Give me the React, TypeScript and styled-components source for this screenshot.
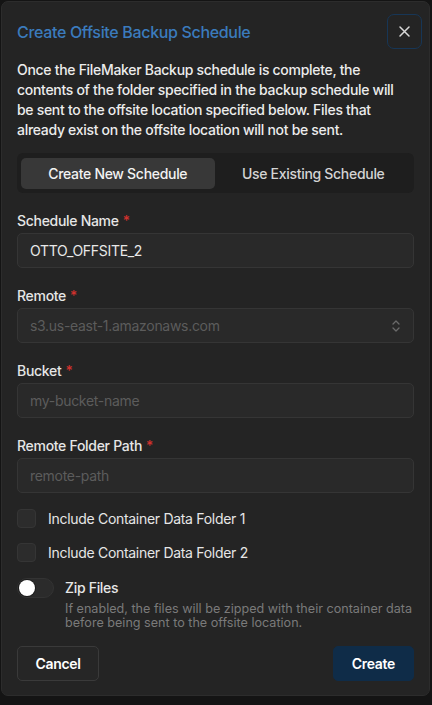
import React from "react";
import styled, { createGlobalStyle } from "styled-components";

const Global = createGlobalStyle`
  html, body { margin: 0; padding: 0; background: #141414; }
  body { font-family: Inter, "Noto Sans", "Liberation Sans", sans-serif; -webkit-font-smoothing: antialiased; letter-spacing: -0.3px; }
  * { box-sizing: border-box; }
`;

const Modal = styled.div`
  margin: 1px;
  width: 429px;
  height: 695px;
  background: #242424;
  border: 1px solid #2c2c2c;
  border-radius: 7px;
  padding: 12px 15px 0 15px;
  display: flex;
  flex-direction: column;
  color: #ececec;
`;

const Header = styled.div`
  display: flex;
  align-items: center;
  justify-content: space-between;
  height: 35px;
`;

const Title = styled.h2`
  margin: 0;
  font-size: 16px;
  font-weight: 500;
  color: #3b7bbd;
  letter-spacing: -0.33px;
`;

const CloseButton = styled.button`
  width: 35px;
  height: 35px;
  margin-right: -8px;
  border: 1.5px solid #173656;
  border-radius: 7px;
  background: transparent;
  display: flex;
  align-items: center;
  justify-content: center;
  padding: 0;
  color: #d8d8d8;
`;

const Description = styled.p`
  margin: 11px 0 0 0;
  font-size: 14px;
  line-height: 20px;
  font-weight: 500;
  color: #ececec;
  white-space: nowrap;
`;

const Tabs = styled.div`
  margin-top: 13px;
  height: 40px;
  background: #1e1e1e;
  border-radius: 6px;
  padding: 5px 4px 4px 4px;
  display: grid;
  grid-template-columns: 1fr 1fr;
  gap: 2px;
`;

const Tab = styled.div<{ $active?: boolean }>`
  display: flex;
  align-items: center;
  justify-content: center;
  border-radius: 5px;
  background: ${(p) => (p.$active ? "#383838" : "transparent")};
  color: ${(p) => (p.$active ? "#f2f2f2" : "#d4d4d4")};
  font-size: 14px;
  font-weight: 500;
`;

const Form = styled.div`
  margin-top: 18px;
  display: flex;
  flex-direction: column;
  gap: 18px;
`;

const Field = styled.div`
  display: flex;
  flex-direction: column;
  gap: 2px;
`;

const Label = styled.label`
  font-size: 14px;
  line-height: 20px;
  font-weight: 500;
  color: #e6e6e6;
`;

const Star = styled.span`
  color: #d0312d;
  margin-left: 4px;
`;

const InputBox = styled.div<{ $placeholder?: boolean }>`
  height: 35px;
  border: 1px solid #353535;
  background: #292929;
  border-radius: 5px;
  padding: 0 12px;
  display: flex;
  align-items: center;
  justify-content: space-between;
  font-size: 14px;
  color: ${(p) => (p.$placeholder ? "#5c5c5c" : "#e8e8e8")};
`;

const Checks = styled.div`
  margin-top: 16px;
  display: flex;
  flex-direction: column;
  gap: 15px;
`;

const CheckRow = styled.div`
  display: flex;
  align-items: center;
  gap: 12px;
  font-size: 14px;
  color: #e6e6e6;
`;

const CheckBox = styled.span`
  width: 19px;
  height: 19px;
  border-radius: 4px;
  background: #2c2c2c;
  border: 1px solid #353535;
`;

const ToggleRow = styled.div`
  margin-top: 16px;
  display: flex;
  gap: 11px;
`;

const Toggle = styled.span`
  width: 37px;
  height: 20px;
  border-radius: 10px;
  background: #2b2b2b;
  border: 1px solid #333;
  padding: 1px;
  display: flex;
  align-items: center;
  flex-shrink: 0;
`;

const Knob = styled.span`
  width: 16px;
  height: 16px;
  border-radius: 50%;
  background: #ffffff;
  box-shadow: 0 0 0 1px #1a1a1a;
`;

const ToggleText = styled.div`
  display: flex;
  flex-direction: column;
`;

const ToggleLabel = styled.div`
  font-size: 14px;
  line-height: 20px;
  font-weight: 500;
  color: #e6e6e6;
`;

const Helper = styled.div`
  margin-top: 4px;
  font-size: 12.6px;
  line-height: 14px;
  letter-spacing: 0;
  white-space: nowrap;
  color: #7a7a7a;
`;

const Footer = styled.div`
  margin-top: 16px;
  display: flex;
  justify-content: space-between;
`;

const Button = styled.button<{ $primary?: boolean }>`
  height: 35px;
  padding: 0 ${(p) => (p.$primary ? "18px" : "17px")};
  min-width: ${(p) => (p.$primary ? "81px" : "82px")};
  border-radius: 5px;
  border: 1px solid ${(p) => (p.$primary ? "#0f2c48" : "#3a3a3a")};
  background: ${(p) => (p.$primary ? "#0f2c48" : "#262626")};
  color: #ffffff;
  font-family: inherit;
  letter-spacing: -0.3px;
  font-size: 14px;
  font-weight: 600;
`;

export default function App() {
  return (
    <>
      <Global />
      <Modal>
        <Header>
          <Title>Create Offsite Backup Schedule</Title>
          <CloseButton aria-label="Close">
            <svg width="15" height="15" viewBox="0 0 15 15" fill="none">
              <path d="M3 3L12 12M12 3L3 12" stroke="#d8d8d8" strokeWidth="1.5" strokeLinecap="round" />
            </svg>
          </CloseButton>
        </Header>
        <Description>
          Once the FileMaker Backup schedule is complete, the
          <br />
          contents of the folder specified in the backup schedule will
          <br />
          be sent to the offsite location specified below. Files that
          <br />
          already exist on the offsite location will not be sent.
        </Description>
        <Tabs>
          <Tab $active>Create New Schedule</Tab>
          <Tab>Use Existing Schedule</Tab>
        </Tabs>
        <Form>
          <Field>
            <Label>
              Schedule Name<Star>*</Star>
            </Label>
            <InputBox>OTTO_OFFSITE_2</InputBox>
          </Field>
          <Field>
            <Label>
              Remote<Star>*</Star>
            </Label>
            <InputBox $placeholder>
              s3.us-east-1.amazonaws.com
              <svg width="10" height="14" viewBox="0 0 10 14" fill="none">
                <path d="M2 5L5 2L8 5M2 9L5 12L8 9" stroke="#6a6a6a" strokeWidth="1.3" strokeLinecap="round" strokeLinejoin="round" />
              </svg>
            </InputBox>
          </Field>
          <Field>
            <Label>
              Bucket<Star>*</Star>
            </Label>
            <InputBox $placeholder>my-bucket-name</InputBox>
          </Field>
          <Field>
            <Label>
              Remote Folder Path<Star>*</Star>
            </Label>
            <InputBox $placeholder>remote-path</InputBox>
          </Field>
        </Form>
        <Checks>
          <CheckRow>
            <CheckBox />
            Include Container Data Folder 1
          </CheckRow>
          <CheckRow>
            <CheckBox />
            Include Container Data Folder 2
          </CheckRow>
        </Checks>
        <ToggleRow>
          <Toggle>
            <Knob />
          </Toggle>
          <ToggleText>
            <ToggleLabel>Zip Files</ToggleLabel>
            <Helper>
              If enabled, the files will be zipped with their container data
              <br />
              before being sent to the offsite location.
            </Helper>
          </ToggleText>
        </ToggleRow>
        <Footer>
          <Button>Cancel</Button>
          <Button $primary>Create</Button>
        </Footer>
      </Modal>
    </>
  );
}
